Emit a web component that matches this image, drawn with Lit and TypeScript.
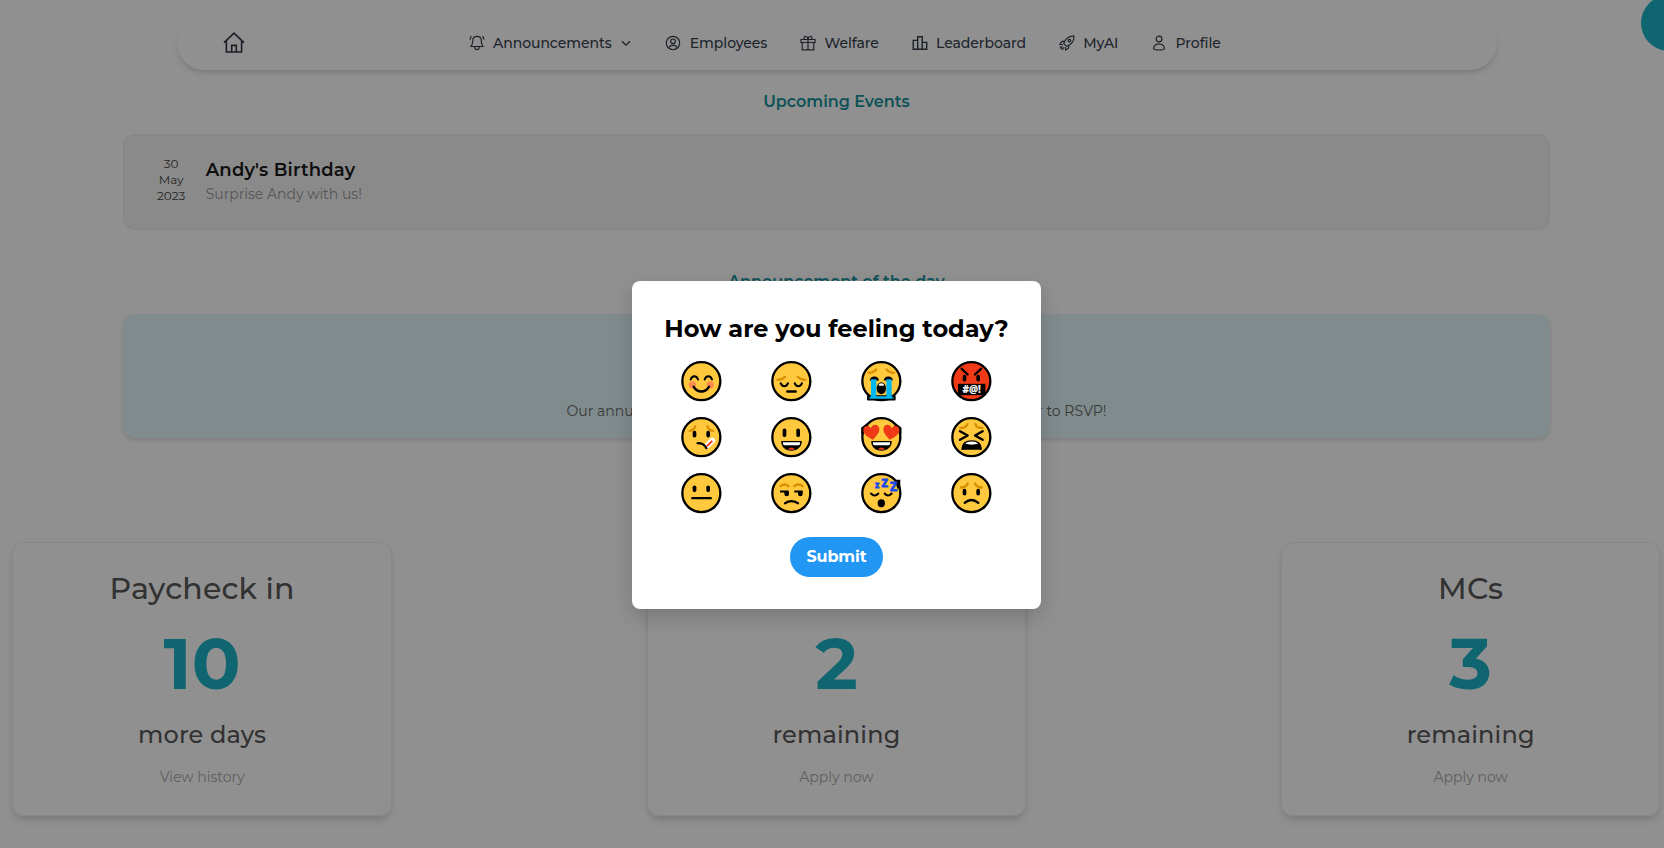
import { LitElement, html, svg, css } from "lit";
import { customElement } from "lit/decorators.js";

const HOME = svg`<path d="M1 10.6 11 1.2l10 9.4M3.4 8.6V20h15.2V8.6M8.7 20v-6.6h4.6V20"/>`;

const BELL = svg`<path d="M8 1.4c-2.7 0-4.3 2-4.3 4.5 0 3-.7 4.2-1.7 5.6h12c-1-1.4-1.7-2.6-1.7-5.6 0-2.5-1.6-4.5-4.3-4.5zM5.7 11.6c0 2.2 1.2 3.1 2.3 3.1s2.3-.9 2.3-3.1M1 4.800C1.100 3.300 1.600 2.200 2.500 1.200M15 4.800c-.1-1.500-.6-2.600-1.500-3.600"/>`;
const PERSON_RING = svg`<circle cx="8" cy="8" r="6.7"/><circle cx="8" cy="6.3" r="2.3"/><path d="M4.1 12.6c.7-1.7 2.1-2.5 3.9-2.5s3.2.8 3.9 2.5"/>`;
const GIFT = svg`<path d="M1 4.500h14v3H1zM2.200 7.500h11.600v7.300H2.200zM8 4.500v10.300M8 4.500C7.600 2.300 6.700 1.200 5.500 1.200c-2 0-2 3.300 0 3.300zM8 4.500c.4-2.200 1.300-3.300 2.500-3.300 2 0 2 3.300 0 3.300z"/>`;
const BARS = svg`<path stroke-width="1.4" d="M1.200 5.400h4.500v8.900H1.200zM5.700 1.700h4.500v12.600H5.700zM10.200 7.400h4.500v6.900h-4.500z"/>`;
const ROCKET = svg`<path d="M14.900 1.100c-4-.3-7.200 1.400-9.300 5.300l-.9 2 2.900 2.900 2-.9c3.900-2.100 5.600-5.300 5.300-9.300zM5.600 6.400 3 6.300.9 9.300l3 .4M9.600 10.400l.1 2.600-3 2.100-.4-3M3.500 11.200l-1.900 2.900M4.900 12.500 3 15M1.800 11.400.9 12.600"/><circle cx="10.4" cy="5.6" r="1.3"/>`;
const PERSON = svg`<circle cx="8" cy="4" r="2.900"/><path d="M8 8.800c-3.300 0-5.400 2.300-5.400 4.700 0 1.100 2.600 1.500 5.400 1.500s5.400-.4 5.400-1.500c0-2.400-2.100-4.700-5.400-4.700z"/>`;
const CHEVRON = svg`<path d="M4 6.200 8 10.200l4-4"/>`;

const NAV = [
  { label: "Announcements", icon: BELL, menu: true },
  { label: "Employees", icon: PERSON_RING },
  { label: "Welfare", icon: GIFT },
  { label: "Leaderboard", icon: BARS },
  { label: "MyAI", icon: ROCKET },
  { label: "Profile", icon: PERSON },
];

const STATS = [
  { title: "Paycheck in", value: "10", unit: "more days", link: "View history" },
  { title: "Leaves", value: "2", unit: "remaining", link: "Apply now" },
  { title: "MCs", value: "3", unit: "remaining", link: "Apply now" },
];

const face = svg`<circle class="face" r="57"/>`;
const oval = (y: number, ry = 10) => svg`<rect x="-26" y=${y - ry} width="11" height=${ry * 2} rx="5.5"/><rect x="15" y=${y - ry} width="11" height=${ry * 2} rx="5.5"/>`;
const laugh = svg`<path stroke="#000" stroke-width="3" d="M-29 13H30C29 30 18 39 0 39S-28 30-29 13z"/><path fill="#fff" d="M-25 15H26V20Q26 24 22 24H-21Q-25 24-25 20z"/><path fill="#f03a17" d="M-10 36Q0 26 11 36Q0 40-10 36z"/>`;
const heart = (x: number, r: number) => svg`<path transform="translate(${x} -16) rotate(${r})" fill="#f03a17" d="M0 24C-14 14-25 4-24-8C-23-21-6-24 0-11C6-24 23-21 24-8C25 4 14 14 0 24z"/>`;

const EMOJIS = [
  svg`${face}<circle cx="-27" cy="11" r="11" fill="#ff8b4f"/><circle cx="27" cy="11" r="11" fill="#ff8b4f"/>
    <path class="ln" d="M-32-5Q-29-15-21-15T-10-5M10-5Q13-15 21-15T32-5"/><path class="ln thick" d="M-23 17Q-14 31 0 31T23 17"/>`,
  svg`${face}<path class="brow" d="M-42-4Q-27-4-19-13M42-4Q27-4 19-13"/>
    <path class="ln" d="M-32 6Q-29 15-21 15T-10 6M10 6Q13 15 21 15T32 6"/><path class="ln thick" d="M-12 31H13"/>`,
  svg`${face}<path class="brow" d="M-38-25Q-24-25-16-35M38-25Q24-25 16-35"/>
    <path d="M-35-2Q-33-14-21-14T-7-2zM35-2Q33-14 21-14T7-2z"/><path fill="#00b7f0" d="M-31-6H-15V50H-31zM15-6H31V50H15z"/>
    <path fill="#00b7f0" stroke="#000" stroke-width="6" stroke-linejoin="round" d="M-31 45H31L40 47V55H-40V47z"/><path fill="#00b7f0" d="M-31 38H-15V50H-31zM15 38H31V50H15zM-33 45H33V52H-33z"/>
    <ellipse cy="21" rx="14" ry="18"/><path fill="#fff" d="M-9 12Q-8 6 0 6T9 12Q0 16-9 12z"/>`,
  svg`<circle class="face angry" r="57"/><path class="ln thick" d="M-29-37-11-20M29-37 11-20"/>${oval(-9)}
    <rect x="-40" y="8" width="82" height="34"/><text class="swear" x="1" y="35" text-anchor="middle">#@!</text>`,
  svg`${face}<path class="brow" d="M-35-19Q-22-20-18-33M35-19Q22-20 18-33"/>${oval(-9)}
    <path stroke="#fff" stroke-width="17" stroke-linecap="round" d="M18 25 33 10"/><path class="ln thick" d="M-11 18Q9 18 15 33"/><path stroke="#f03a17" stroke-width="6" d="M17 27 33 11"/>`,
  svg`${face}${oval(-13, 13)}${laugh}`,
  svg`${face}<path class="ln thick" d="M-57-10V-27L-42-38M57-10V-27L42-38"/>${heart(-29, -10)}${heart(29, 10)}${laugh}`,
  svg`${face}<path class="brow" d="M-33-28Q-17-26-12-39M33-28Q17-26 12-39"/>
    <path class="ln thick" d="M-34-18-11-5-34 8M34-18 11-5 34 8"/><path d="M-30 36Q-29 9 1 9T32 36Q31 39 24 38Q0 37-22 38Q-29 40-30 36z"/><path fill="#fff" d="M-18 20Q-13 13 1 13T20 20Q0 25-18 20z"/>`,
  svg`${face}${oval(-13)}<path class="ln thick" d="M-27 15H28"/>`,
  svg`${face}<path class="brow" d="M-32-21Q-20-31-9-21M9-21Q20-31 34-21"/>
    <path class="ln flat" d="M-34-5H-8M9-5H34"/><path d="M-21-4H-7V3A7 6 0 0 1-21 3zM20-4H34V3A7 6 0 0 1 20 3z"/><path class="ln thick" d="M-19 30Q0 18 20 30"/>`,
  svg`${face}<path d="M40-40H57V-14H48z"/><path class="ln" d="M-31 1Q-20 13-9 1M10 1Q20 13 31 1"/><ellipse cy="30" rx="11" ry="12"/>
    <text class="z z1" x="-18" y="-15">Z</text><text class="z z2" x="1" y="-19">Z</text><text class="z z3" x="27" y="-8">Z</text>`,
  svg`${face}<path class="brow" d="M-31-17Q-16-17-11-29M31-17Q16-17 11-29"/>${oval(-3)}<path class="ln thick" d="M-20 29Q0 12 21 29"/>`,
];

@customElement("app-root")
export class AppRoot extends LitElement {
  static styles = css`
    :host { display: block; position: relative; width: 100%; height: 848px; overflow: hidden; background: #fff; font-family: Montserrat, Inter, sans-serif; font-size: 14px; line-height: 20px; color: #374151; }
    * { box-sizing: border-box; }
    .page { width: 1673px; height: 848px; padding-top: 16px; }
    .nav { width: 1320px; height: 54px; margin: 0 auto; padding-left: 46px; display: flex; align-items: center; border-radius: 27px; box-shadow: 0 4px 6px -1px rgba(0,0,0,.12), 0 2px 4px -2px rgba(0,0,0,.1); }
    svg { display: block; flex: none; overflow: visible; }
    .nav svg { fill: none; stroke: #333a45; stroke-width: 1.15; }
    .nav .home { width: 22px; height: 22px; stroke: #303743; stroke-width: 1.6; margin-right: 224px; }
    .items { display: flex; gap: 32.7px; font-weight: 500; }
    .item { display: flex; align-items: center; gap: 8.5px; letter-spacing: -.06px; }
    .item svg { width: 16px; height: 16px; }
    .nav .chev { stroke-width: 1.3; margin: 0 -1.5px 0 -2px; }
    h2 { margin: 0; font-size: 16px; line-height: 24px; font-weight: 600; color: #1a929e; text-align: center; }
    .first { margin-top: 20px; }
    .event { width: 1427.6px; height: 96px; margin: 20px auto 40px; padding: 20px 32px; display: flex; gap: 20px; background: #f5f5f5; border: 2px solid #f0f0f0; border-radius: 12px; }
    .date { width: 29px; display: flex; flex-direction: column; align-items: center; font-size: 12px; line-height: 16px; color: #444; }
    .name { font-size: 18px; line-height: 28px; font-weight: 600; letter-spacing: .17px; color: #1a1a1a; }
    .desc { color: #999; }
    .news { width: 1427px; height: 124px; margin: 20px auto 0; display: flex; align-items: flex-end; justify-content: center; padding-bottom: 17px; background: #e2f7fa; border-radius: 12px; box-shadow: 0 2px 4px rgba(0,0,0,.14); color: #666; letter-spacing: .025px; }
    .stats { margin-top: 104px; padding: 0 12.6px 0 12.4px; display: flex; justify-content: space-between; }
    .card { width: 379.5px; height: 274px; padding-top: 28px; border: 1px solid #efefef; border-radius: 12px; box-shadow: 0 6px 10px -2px rgba(0,0,0,.14), 0 2px 4px rgba(0,0,0,.04); display: flex; flex-direction: column; align-items: center; }
    .title { font-size: 30px; line-height: 36px; font-weight: 550; letter-spacing: .2px; color: #5a5a5a; }
    .value { margin-top: 20px; font-size: 72px; line-height: 72px; font-weight: 700; color: #1cb5c9; }
    .unit { margin-top: 20px; font-size: 24px; line-height: 32px; font-weight: 550; letter-spacing: .15px; color: #5a5a5a; }
    .link { margin-top: 16px; color: #aaa; }
    .bubble { position: absolute; left: 1641px; top: -5px; width: 56px; height: 56px; border-radius: 50%; background: #1cb5c9; }
    .veil { position: absolute; left: 0; top: 0; width: 1673px; height: 848px; padding-top: 281px; background: rgba(0,0,0,.436); }
    .modal { width: 409px; height: 328px; margin: 0 auto; padding-top: 32px; display: flex; flex-direction: column; align-items: center; background: #fff; border-radius: 8px; box-shadow: 0 8px 20px rgba(0,0,0,.16); }
    .ask { font-size: 24px; line-height: 32px; font-weight: 700; color: #000; white-space: nowrap; }
    .grid { margin: 15px 1px 0 0; display: grid; grid-template-columns: repeat(4, 90px); grid-auto-rows: 42px; row-gap: 14px; justify-items: center; }
    .grid svg { width: 42px; height: 42px; }
    .face { fill: #ffc83d; stroke: #000; stroke-width: 7; }
    .angry { fill: #f03a17; }
    .ln { fill: none; stroke: #000; stroke-width: 6; stroke-linecap: round; stroke-linejoin: round; }
    .thick { stroke-width: 7; }
    .flat { stroke-linecap: butt; }
    .brow { fill: none; stroke: #d98f00; stroke-width: 7; stroke-linecap: round; }
    .swear { fill: #fff; stroke: #fff; stroke-width: .5; font: 700 30px "Noto Sans", sans-serif; }
    .z { fill: #1a49ee; stroke: #1a49ee; stroke-width: 3; font: 700 21px "Noto Sans", sans-serif; }
    .z1 { font-size: 20px; }
    .z2 { font-size: 32px; }
    .z3 { font-size: 36px; }
    .submit { margin-top: 23px; width: 93px; height: 40px; padding: 0; border: 0; border-radius: 20px; background: #2196f3; color: #fff; font: 700 16px/40px Montserrat, Inter, sans-serif; letter-spacing: -.1px; }
  `;

  render() {
    return html`
      <div class="page">
        <nav class="nav">
          <svg class="home" viewBox="0 0 22 22">${HOME}</svg>
          <div class="items">
            ${NAV.map((n) => html`<div class="item">
              <svg viewBox="0 0 16 16">${n.icon}</svg><span>${n.label}</span>
              ${n.menu ? html`<svg class="chev" viewBox="0 0 16 16">${CHEVRON}</svg>` : ""}
            </div>`)}
          </div>
        </nav>
        <h2 class="first">Upcoming Events</h2>
        <section class="event">
          <div class="date"><span>30</span><span>May</span><span>2023</span></div>
          <div><div class="name">Andy's Birthday</div><div class="desc">Surprise Andy with us!</div></div>
        </section>
        <h2>Announcement of the day</h2>
        <section class="news">Our annual company dinner is around the corner, please remember to RSVP!</section>
        <section class="stats">
          ${STATS.map((s) => html`<div class="card">
            <div class="title">${s.title}</div><div class="value">${s.value}</div>
            <div class="unit">${s.unit}</div><div class="link">${s.link}</div>
          </div>`)}
        </section>
      </div>
      <div class="bubble"></div>
      <div class="veil">
        <div class="modal">
          <div class="ask">How are you feeling today?</div>
          <div class="grid">${EMOJIS.map((e) => html`<svg viewBox="-64 -63.5 126 126">${e}</svg>`)}</div>
          <button class="submit">Submit</button>
        </div>
      </div>
    `;
  }
}
